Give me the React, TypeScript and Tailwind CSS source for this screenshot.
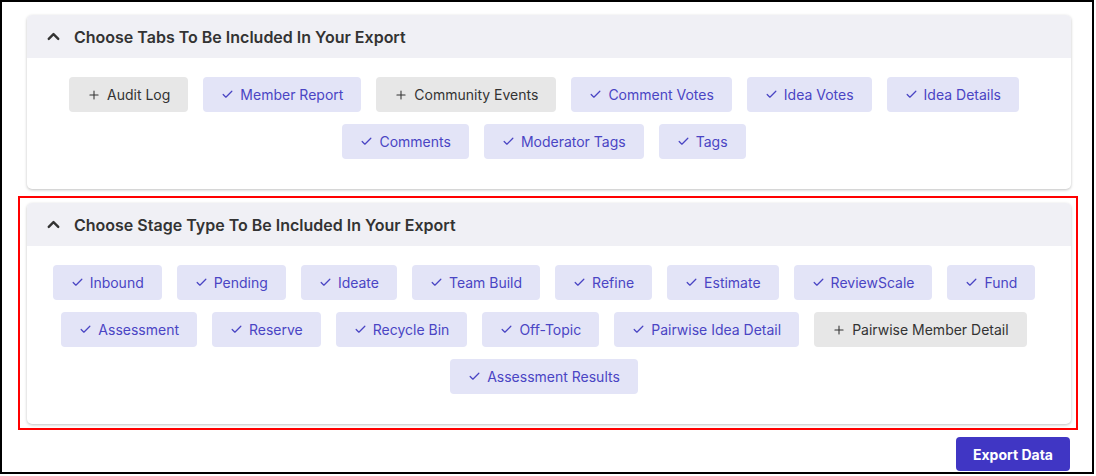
import { Check, ChevronUp, Plus } from "lucide-react";

type Chip = { label: string; on: boolean };

const tabs: Chip[] = [
  { label: "Audit Log", on: false },
  { label: "Member Report", on: true },
  { label: "Community Events", on: false },
  { label: "Comment Votes", on: true },
  { label: "Idea Votes", on: true },
  { label: "Idea Details", on: true },
  { label: "Comments", on: true },
  { label: "Moderator Tags", on: true },
  { label: "Tags", on: true },
];

const stages: Chip[] = [
  { label: "Inbound", on: true },
  { label: "Pending", on: true },
  { label: "Ideate", on: true },
  { label: "Team Build", on: true },
  { label: "Refine", on: true },
  { label: "Estimate", on: true },
  { label: "ReviewScale", on: true },
  { label: "Fund", on: true },
  { label: "Assessment", on: true },
  { label: "Reserve", on: true },
  { label: "Recycle Bin", on: true },
  { label: "Off-Topic", on: true },
  { label: "Pairwise Idea Detail", on: true },
  { label: "Pairwise Member Detail", on: false },
  { label: "Assessment Results", on: true },
];

function ChipButton({ label, on }: Chip) {
  return (
    <button
      className={
        on
          ? "flex h-[35px] items-center gap-[6px] rounded-[4px] bg-[#e3e4f7] px-[18px] text-[14px] text-[#4a45c4]"
          : "flex h-[35px] items-center gap-[6px] rounded-[4px] bg-[#e7e7e7] px-[18px] text-[14px] text-[#333333]"
      }
    >
      {on ? <Check size={13} strokeWidth={2.3} /> : <Plus size={14} strokeWidth={1.8} />}
      <span>{label}</span>
    </button>
  );
}

function Section({ title, chips }: { title: string; chips: Chip[] }) {
  return (
    <section className="rounded-[5px] bg-white shadow-[0_1px_3px_rgba(0,0,0,0.25)]">
      <header className="flex h-[43px] items-center gap-[11px] rounded-t-[5px] bg-[#f0f0f5] pl-[17px]">
        <ChevronUp size={19} strokeWidth={3} className="text-[#333]" />
        <h2 className="text-[16px] font-semibold text-[#333]">{title}</h2>
      </header>
      <div className="flex flex-wrap justify-center gap-x-[15px] gap-y-[12px] pb-[30px] pl-[12px] pr-[22px] pt-[19px]">
        {chips.map((c) => (
          <ChipButton key={c.label} {...c} />
        ))}
      </div>
    </section>
  );
}

export default function App() {
  return (
    <div className="h-[476px] w-[1096px] bg-white" style={{ fontFamily: "Inter, 'Noto Sans', sans-serif" }}>
      <div className="flex h-[474px] w-[1094px] flex-col border-2 border-black">
        <div className="ml-[25px] mr-[21px] mt-[13px]">
          <Section title="Choose Tabs To Be Included In Your Export" chips={tabs} />
        </div>
        <div className="ml-[16px] mr-[14px] mt-[7px] border-2 border-[#ff0000] pb-[4px] pl-[7px] pr-[5px] pt-[5px]">
          <Section title="Choose Stage Type To Be Included In Your Export" chips={stages} />
        </div>
        <div className="mr-[22px] mt-[7px] flex justify-end">
          <button className="h-[34px] rounded-[4px] bg-[#4036c4] px-[17px] text-[14px] font-bold text-white">
            Export Data
          </button>
        </div>
      </div>
    </div>
  );
}
